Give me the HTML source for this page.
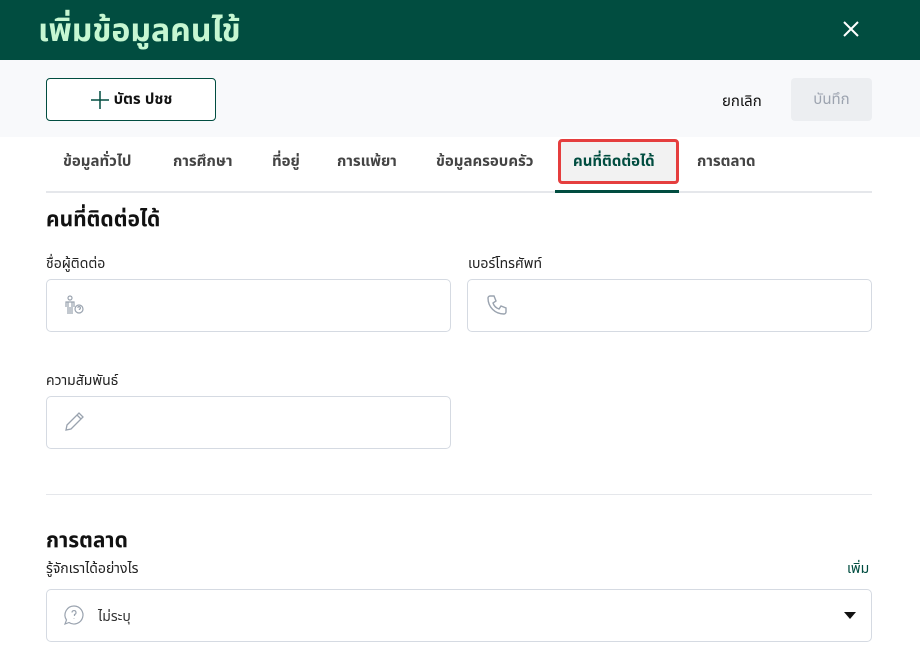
<!DOCTYPE html>
<html><head><meta charset="utf-8"><style>
*{box-sizing:border-box;margin:0;padding:0}
body{width:920px;height:650px;overflow:hidden;background:#fff;font-family:"Liberation Sans","Noto Sans Thai","Loma",sans-serif;color:#1f2937;position:relative}
.abs{position:absolute}
.hdr{left:0;top:0;width:920px;height:60px;background:#014d40}
.title{left:38px;top:10px;font-size:32px;color:#c6f7d2;line-height:40px;font-weight:bold}
.tb{left:0;top:60px;width:920px;height:77px;background:#f8f9fb}
.btn1{left:46px;top:78px;width:170px;height:43px;border:1px solid #014d40;border-radius:4px;background:#fff;display:flex;align-items:center;justify-content:center;font-weight:bold;font-size:15px;color:#111}
.tab{top:152px;font-size:15px;color:#444;font-weight:bold;line-height:20px}
.lab{font-size:14px;color:#222}
.inp{border:1px solid #d5dae2;border-radius:5px;background:#fff;height:53px}
</style></head><body>
<div class="abs hdr"></div>
<div class="abs title">เพิ่มข้อมูลคนไข้</div>
<svg class="abs" style="left:842px;top:20px" width="18" height="18" viewBox="0 0 18 18"><path d="M2 2L16 16M16 2L2 16" stroke="#fff" stroke-width="2"/></svg>
<div class="abs tb"></div>
<div class="abs btn1"><svg width="20" height="20" viewBox="0 0 20 20" style="margin-right:4px"><path d="M10 1v18M1 10h18" stroke="#014d40" stroke-width="1.5"/></svg>บัตร ปชช</div>
<div class="abs" style="left:722px;top:90px;font-size:15px;color:#111">ยกเลิก</div>
<div class="abs" style="left:791px;top:78px;width:81px;height:43px;background:#eceef1;border-radius:4px;display:flex;align-items:center;justify-content:center;font-size:15px;color:#9ca3af">บันทึก</div>
<div class="abs tab" style="left:63px">ข้อมูลทั่วไป</div>
<div class="abs tab" style="left:173px">การศึกษา</div>
<div class="abs tab" style="left:272px">ที่อยู่</div>
<div class="abs tab" style="left:337px">การแพ้ยา</div>
<div class="abs tab" style="left:436px">ข้อมูลครอบครัว</div>
<div class="abs" style="left:558px;top:139px;width:121px;height:45px;border:3px solid #e53e3e;border-radius:4px;background:#f2f2f2"></div>
<div class="abs tab" style="left:573px;color:#014d40">คนที่ติดต่อได้</div>
<div class="abs tab" style="left:697px">การตลาด</div>
<div class="abs" style="left:46px;top:191px;width:826px;height:2px;background:#e5e7eb"></div>
<div class="abs" style="left:555px;top:190px;width:124px;height:3px;background:#014d40"></div>
<div class="abs" style="left:46px;top:205px;font-size:21px;font-weight:bold;color:#111">คนที่ติดต่อได้</div>
<div class="abs lab" style="left:46px;top:254px">ชื่อผู้ติดต่อ</div>
<div class="abs lab" style="left:468px;top:254px">เบอร์โทรศัพท์</div>
<div class="abs inp" style="left:46px;top:279px;width:405px"></div>
<div class="abs inp" style="left:467px;top:279px;width:405px"></div>
<svg class="abs" style="left:64px;top:295px" width="24" height="22" viewBox="0 0 24 22" fill="none" stroke="#9aa3af" stroke-width="1.2"><circle cx="6" cy="3" r="2"/><path d="M2 12V7h8v5M4 7v12M8 7v12M6 12v7"/><circle cx="15" cy="14" r="4"/><path d="M13.8 12.8a1.3 1.3 0 1 1 1.6 1.4v.8"/></svg>
<svg class="abs" style="left:485px;top:293px" width="24" height="24" viewBox="0 0 24 24" fill="none" stroke="#9aa3af" stroke-width="1.4"><path d="M5 3l4 0 2 5-3 2c1 3 3 5 6 6l2-3 5 2v4c0 1-1 2-2 2C10 21 3 14 3 5c0-1 1-2 2-2z"/></svg>
<div class="abs lab" style="left:46px;top:371px">ความสัมพันธ์</div>
<div class="abs inp" style="left:46px;top:396px;width:405px"></div>
<svg class="abs" style="left:63px;top:409px" width="24" height="24" viewBox="0 0 24 24" fill="none" stroke="#9aa3af" stroke-width="1.3"><path d="M3 21l1-5L16 4l4 4L8 20z M14 6l4 4"/></svg>
<div class="abs" style="left:46px;top:494px;width:826px;height:1px;background:#e5e7eb"></div>
<div class="abs" style="left:46px;top:526px;font-size:21px;font-weight:bold;color:#111">การตลาด</div>
<div class="abs lab" style="left:46px;top:559px">รู้จักเราได้อย่างไร</div>
<div class="abs lab" style="left:847px;top:559px;color:#014d40">เพิ่ม</div>
<div class="abs inp" style="left:46px;top:589px;width:826px"></div>
<svg class="abs" style="left:62px;top:604px" width="24" height="22" viewBox="0 0 24 22" fill="none" stroke="#9aa3af" stroke-width="1.2"><path d="M12 2a9 9 0 1 1-5 16.5L3 20l1.5-4A9 9 0 0 1 12 2z"/><path d="M10 8.5a2 2 0 1 1 2.5 2v1.5M12 14.5v.5"/></svg>
<div class="abs" style="left:98px;top:607px;font-size:14px;color:#333">ไม่ระบุ</div>
<svg class="abs" style="left:844px;top:612px" width="12" height="8" viewBox="0 0 12 8"><path d="M0 0h12L6 7z" fill="#111"/></svg>
</body></html>
